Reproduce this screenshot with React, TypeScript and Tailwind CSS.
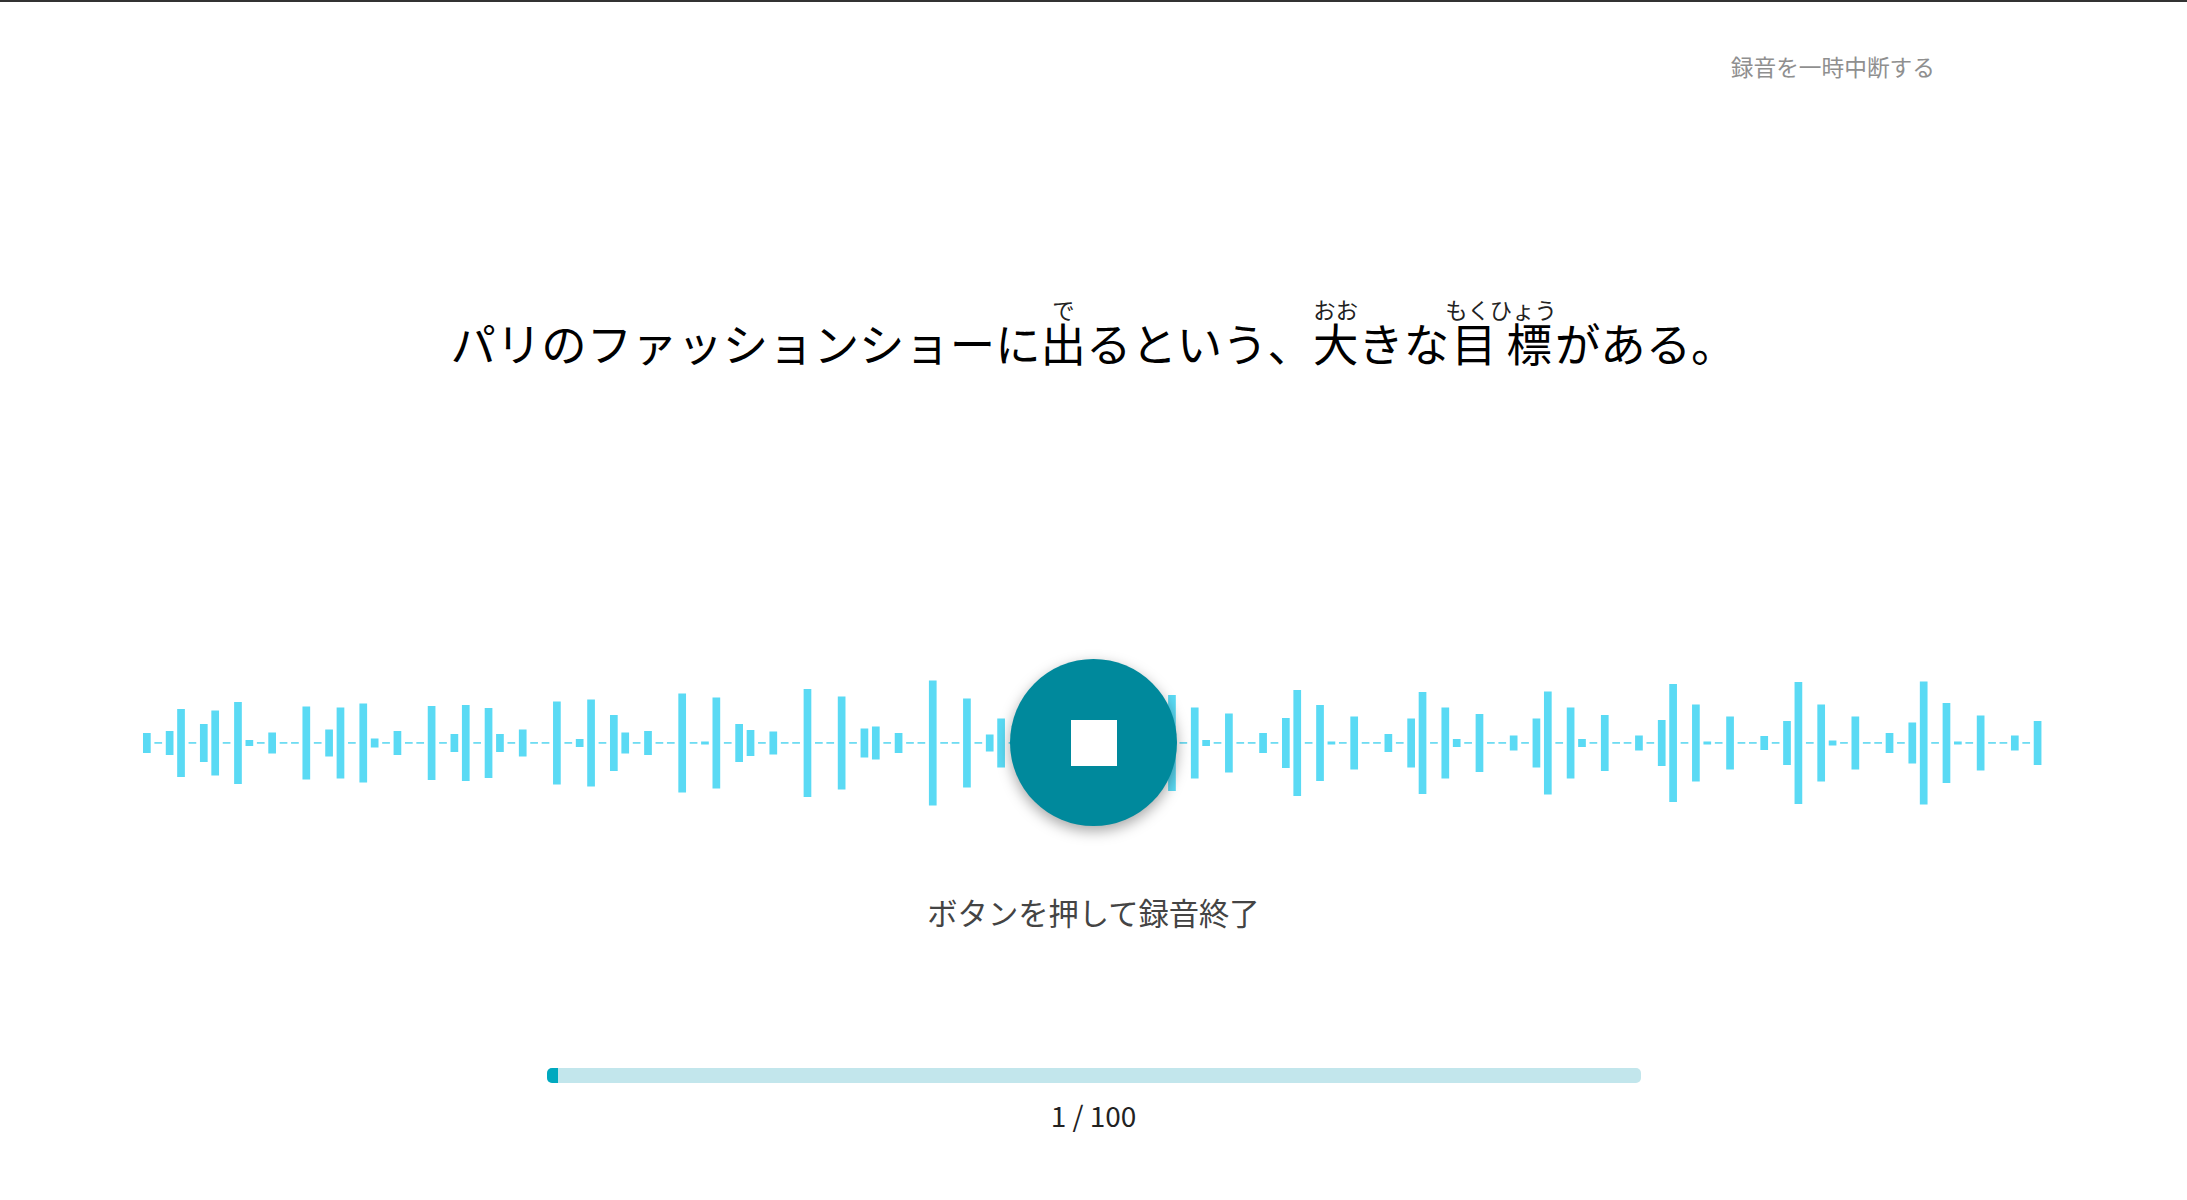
import React from "react";

const HEIGHTS: number[] = [
  20, 0, 24, 68, 0, 38, 65, 0, 82, 6, 0, 21, 0, 0, 73, 0, 27, 71, 0, 79, 9, 0, 24, 0, 0, 74, 0, 18, 76, 0, 70, 18, 0, 27, 0, 0, 83, 0, 8, 87, 0, 56,
  21, 0, 24, 0, 0, 99, 0, 3, 91, 0, 38, 26, 0, 23, 0, 0, 108, 0, 0, 93, 0, 29, 33, 0, 20, 0, 0, 125, 0, 0, 89, 0, 17, 49, 0,
  0, 0, 0, 0, 0, 0, 0, 0, 0, 0, 0, 0, 0,
  96, 0, 71, 6, 0, 59, 0, 0, 20, 0, 50, 106, 0, 76, 3, 0, 53, 0, 0, 18, 0, 49, 102, 0, 71, 8, 0, 58, 0, 0, 15, 0, 49, 103, 0, 71, 8, 0, 56, 0,
  0, 15, 0, 46, 118, 0, 77, 3, 0, 53, 0, 0, 14, 0, 44, 122, 0, 77, 5, 0, 53, 0, 0, 20, 0, 41, 123, 0, 80, 3, 0, 55, 0, 0, 15, 0, 44,
];

function Waveform() {
  return (
    <svg viewBox="0 0 1899 140" className="block w-[1899px] h-[140px]">
      {HEIGHTS.map((h, i) => {
        const x = i * 11.39;
        return h === 0 ? (
          <rect key={i} x={x} y={69} width={7.7} height={1.8} fill="#6fdcf2" />
        ) : (
          <rect key={i} x={x} y={70 - h / 2} width={7.7} height={h} fill="#5adaf4" />
        );
      })}
    </svg>
  );
}

export default function App() {
  return (
    <div className="w-full h-[1200px] bg-white border-t-2 border-[#333333] flex flex-col overflow-hidden font-['Noto_Sans_CJK_JP','Noto_Sans',sans-serif]">
      <div className="flex justify-end pr-[252px] pt-[48px]">
        <span className="text-[22.7px] leading-[34px] text-[#8f8f8f]">録音を一時中断する</span>
      </div>

      <div className="mt-[202px] h-[90px] flex justify-center items-end text-[45.4px] leading-[68px] text-black whitespace-nowrap">
        <p>
          パリのファッションショーに
          <ruby>
            出<rt className="text-[22.3px] text-[#222222]">で</rt>
          </ruby>
          るという、
          <ruby>
            大<rt className="text-[22.3px] text-[#222222]">おお</rt>
          </ruby>
          <span className="mr-[-4px]">きな</span>
          <ruby>
            <span className="pl-[6px] pr-[10px]">目</span>
            <span className="pr-[5px]">標</span>
            <rt className="text-[22.3px] text-[#222222]">もくひょう</rt>
          </ruby>
          <span className="ml-[-2px]">がある。</span>
        </p>
      </div>

      <div className="relative mt-[283px] pl-[143px] h-[167px] flex items-center">
        <Waveform />
        <div className="absolute inset-0 flex items-center justify-center">
          <button className="w-[167px] h-[167px] rounded-full bg-[#00899c] shadow-[0_5px_14px_rgba(0,0,0,0.35)] flex items-center justify-center">
            <span className="block w-[46px] h-[46px] bg-white" />
          </button>
        </div>
      </div>

      <p className="mt-[64px] text-center text-[30.3px] leading-[44px] text-[#444444]">ボタンを押して録音終了</p>

      <div className="mt-[134px] mx-auto w-[1094px] h-[15px] rounded-[5px] bg-[#c2e6ec] overflow-hidden">
        <div className="w-[11px] h-full bg-[#00a9bf]" />
      </div>

      <p className="mt-[12px] text-center text-[28px] leading-[40px] text-[#222222]">1 / 100</p>
    </div>
  );
}
